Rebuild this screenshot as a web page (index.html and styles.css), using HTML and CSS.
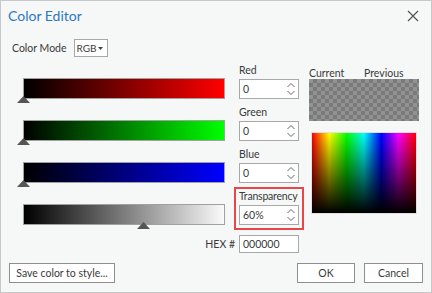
FILE: index.html
```html
<!DOCTYPE html>
<html lang="en">
<head>
    <meta charset="UTF-8">
    <title>Color Editor</title>
    <link rel="stylesheet" href="styles.css">
</head>
<body>
    <div class="dialog">
        <!-- Title bar -->
        <div class="titlebar">
            <span class="title">Color Editor</span>
            <svg class="close" width="12" height="12" viewBox="0 0 12 12">
                <path d="M1 1 L11 11 M11 1 L1 11" stroke="#555" stroke-width="1.2" fill="none"/>
            </svg>
        </div>

        <!-- Color mode -->
        <div class="mode-row">
            <span class="label">Color Mode</span>
            <div class="select">
                <span>RGB</span>
                <svg width="5" height="3" viewBox="0 0 5 3"><path d="M0 0 H5 L2.5 3 Z" fill="#444"/></svg>
            </div>
        </div>

        <div class="main">
            <div class="channels">
                <!-- Red -->
                <div class="slider red"><span class="thumb" style="left: 0%"></span></div>
                <div class="field">
                    <span class="label">Red</span>
                    <div class="spin"><span>0</span><svg class="arrows" width="10" height="16" viewBox="0 0 10 16"><path d="M1.5 6 L5 2.5 L8.5 6 M1.5 10 L5 13.5 L8.5 10" stroke="#666" stroke-width="1" fill="none"/></svg></div>
                </div>

                <!-- Green -->
                <div class="slider green"><span class="thumb" style="left: 0%"></span></div>
                <div class="field">
                    <span class="label">Green</span>
                    <div class="spin"><span>0</span><svg class="arrows" width="10" height="16" viewBox="0 0 10 16"><path d="M1.5 6 L5 2.5 L8.5 6 M1.5 10 L5 13.5 L8.5 10" stroke="#666" stroke-width="1" fill="none"/></svg></div>
                </div>

                <!-- Blue -->
                <div class="slider blue"><span class="thumb" style="left: 0%"></span></div>
                <div class="field">
                    <span class="label">Blue</span>
                    <div class="spin"><span>0</span><svg class="arrows" width="10" height="16" viewBox="0 0 10 16"><path d="M1.5 6 L5 2.5 L8.5 6 M1.5 10 L5 13.5 L8.5 10" stroke="#666" stroke-width="1" fill="none"/></svg></div>
                </div>

                <!-- Transparency -->
                <div class="slider alpha"><span class="thumb" style="left: 60%"></span></div>
                <div class="field highlight">
                    <span class="label narrow">Transparency</span>
                    <div class="spin"><span>60%</span><svg class="arrows" width="10" height="16" viewBox="0 0 10 16"><path d="M1.5 6 L5 2.5 L8.5 6 M1.5 10 L5 13.5 L8.5 10" stroke="#666" stroke-width="1" fill="none"/></svg></div>
                </div>

                <!-- Hex -->
                <div class="hex-row">
                    <span class="label">HEX #</span>
                    <div class="hex-input">000000</div>
                </div>
            </div>

            <div class="preview">
                <div class="preview-labels">
                    <span class="label">Current</span>
                    <span class="label">Previous</span>
                </div>
                <div class="swatch"></div>
                <div class="spectrum"></div>
            </div>
        </div>

        <div class="footer">
            <button class="btn save">Save color to style...</button>
            <div class="actions">
                <button class="btn ok">OK</button>
                <button class="btn cancel">Cancel</button>
            </div>
        </div>
    </div>
</body>
</html>
```

FILE: styles.css
```css
* {
    box-sizing: border-box;
    margin: 0;
    padding: 0;
}

body {
    background: #fff;
    font-family: Lato, 'Liberation Sans', sans-serif;
    font-size: 10.5px;
    color: #3a3a3a;
}

/* Dialog frame */
.dialog {
    width: 432px;
    height: 293px;
    border: 1px solid #c8c8c8;
    background-color: #f6f7f7;
    display: flex;
    flex-direction: column;
}

.dialog > * {
    flex-shrink: 0;
}

.titlebar {
    height: 28px;
    padding: 0 12px 0 7px;
    display: flex;
    align-items: center;
    justify-content: space-between;
}

.title {
    font-size: 14px;
    color: #2b79c2;
}

.close {
    margin-top: 1px;
}

/* Color mode */
.mode-row {
    margin-top: 10px;
    padding-left: 11px;
    display: flex;
    align-items: center;
    gap: 7px;
}

.select {
    width: 34px;
    height: 18px;
    border: 1px solid #a8a8a8;
    background: #fff;
    padding: 0 4px 0 2px;
    font-size: 10px;
    display: flex;
    align-items: center;
    justify-content: space-between;
}

/* Main area */
.main {
    margin-top: 6px;
    padding-left: 22px;
    display: flex;
}

.channels {
    display: grid;
    grid-template-columns: 202px 60px;
    grid-template-rows: repeat(4, 36px) 22px;
    column-gap: 14px;
    row-gap: 6px;
}

.slider {
    position: relative;
    align-self: end;
    height: 21px;
    border: 1px solid #a0a0a0;
}

.red { background: linear-gradient(to right, #000, #ff0000); }
.green { background: linear-gradient(to right, #000, #00ff00); }
.blue { background: linear-gradient(to right, #000, #0000ff); }
.alpha { background: linear-gradient(to right, #000, #fafafa); }

.thumb {
    position: absolute;
    bottom: -5px;
    width: 13px;
    height: 7px;
    margin-left: -7px;
    background: #555;
    clip-path: polygon(50% 0, 100% 100%, 0 100%);
}

.field {
    display: flex;
    flex-direction: column;
    position: relative;
}

.field .label {
    height: 16px;
    line-height: 14px;
}

.narrow {
    letter-spacing: -0.2px;
}

.spin {
    height: 20px;
    border: 1px solid #a8a8a8;
    background: #fff;
    display: flex;
    align-items: center;
    justify-content: space-between;
    padding: 0 2px 0 3px;
}

.highlight::after {
    content: "";
    position: absolute;
    left: -5px;
    right: -5px;
    top: -2px;
    bottom: -5px;
    border: 2px solid #e8474a;
}

.hex-row {
    grid-column: 1 / -1;
    margin-top: 4px;
    display: flex;
    justify-content: flex-end;
    align-items: center;
    gap: 4px;
}

.hex-input {
    width: 60px;
    height: 18px;
    border: 1px solid #a8a8a8;
    background: #fff;
    padding-left: 3px;
    line-height: 16px;
}

/* Preview column */
.preview {
    width: 110px;
    margin-left: 10px;
    display: flex;
    flex-direction: column;
}

.preview-labels {
    height: 16px;
    display: flex;
    align-items: flex-end;
}

.preview-labels .label {
    width: 55px;
}

.swatch {
    height: 42px;
    background-color: #8a8a8a;
    background-image: conic-gradient(#7a7a7a 25%, #939393 0 50%, #7a7a7a 0 75%, #939393 0);
    background-size: 8px 8px;
}

.spectrum {
    height: 82px;
    margin: 11px 2px 0;
    border: 1px solid #e0e0e0;
    background: linear-gradient(to bottom, rgba(0,0,0,0), #000),
                linear-gradient(to right, #f00, #ff0, #0f0, #0ff, #00f, #f0f, #f00);
}

/* Footer buttons */
.footer {
    margin-top: auto;
    padding: 0 8px 9px 8px;
    display: flex;
    justify-content: space-between;
}

.actions {
    display: flex;
    gap: 9px;
}

.btn {
    height: 20px;
    border: 1px solid #8f8f8f;
    background: #fff;
    font-family: inherit;
    font-size: 10.5px;
    color: #3a3a3a;
}

.save { width: 106px; }
.ok { width: 58px; }
.cancel { width: 59px; }
```
